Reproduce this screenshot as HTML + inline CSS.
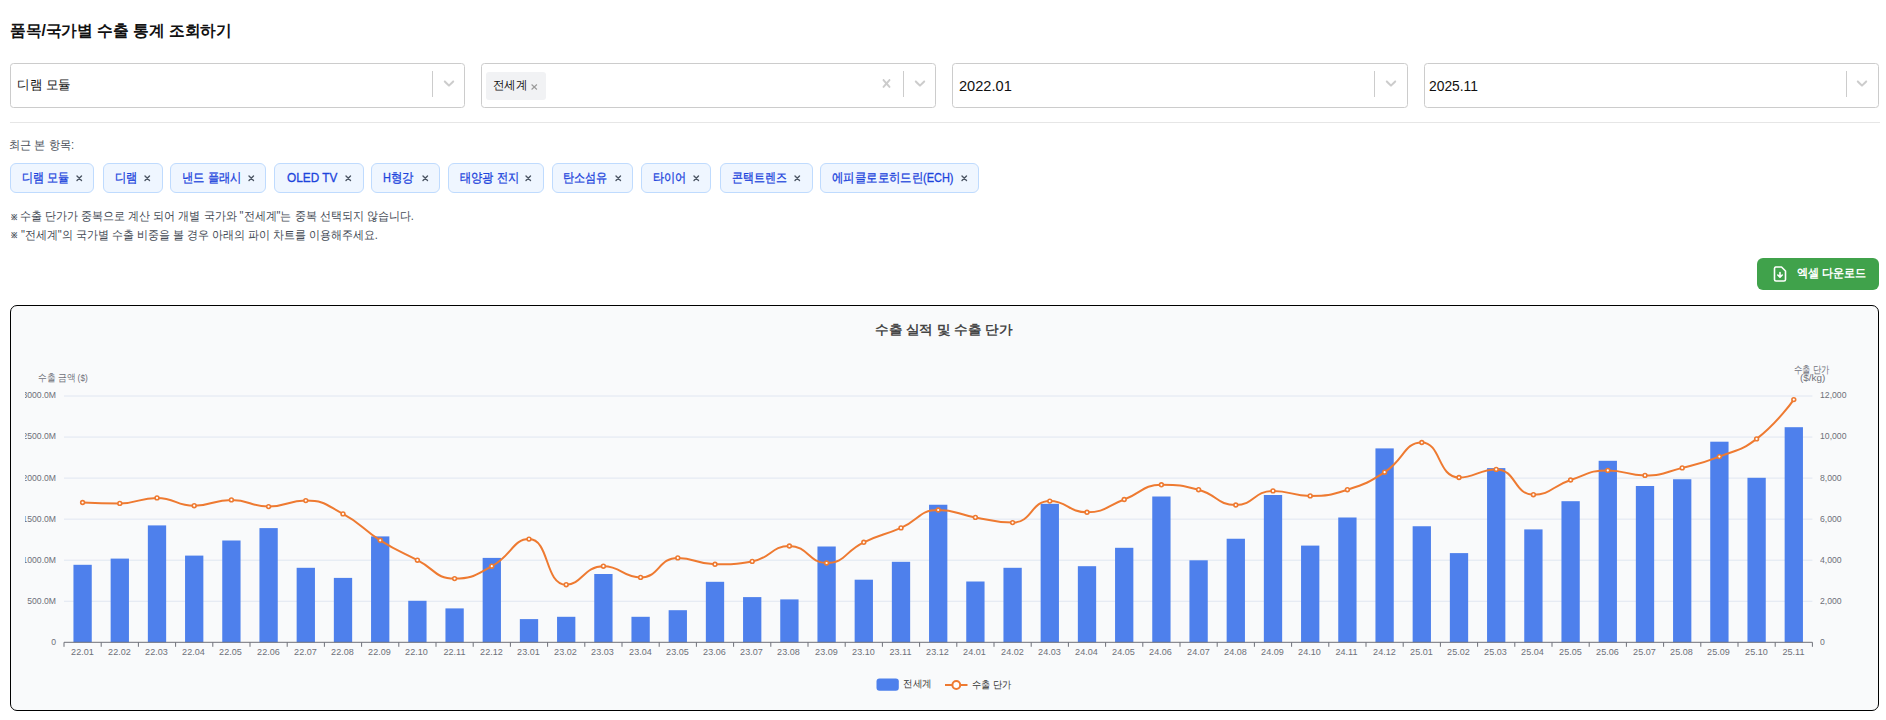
<!DOCTYPE html>
<html><head><meta charset="utf-8">
<style>
html,body{margin:0;padding:0;background:#fff;width:1886px;height:720px;overflow:hidden;position:relative;font-family:"Liberation Sans",sans-serif;}
.t{position:absolute;white-space:nowrap;line-height:1;transform-origin:0 0;font-family:"Liberation Sans",sans-serif;}
.ax{font-size:10px;color:#6e7079;}
.ax.c{transform-origin:0 0;}
.ax.r{transform-origin:100% 0;}
.ic{position:absolute;}
.sel{position:absolute;top:63px;height:45px;box-sizing:border-box;border:1px solid #cccccc;border-radius:3.5px;background:#fff;}
.sep{position:absolute;top:70.5px;width:1px;height:26.5px;background:#cccccc;}
.mv{position:absolute;left:486.2px;top:72px;width:59.6px;height:27.6px;background:#f1f2f4;border-radius:3px;}
.hr{position:absolute;left:10px;top:122px;width:1870px;height:1px;background:#e6e6e6;}
.chip{position:absolute;top:163.3px;height:29.4px;box-sizing:border-box;border:1px solid #bfdbfe;background:#eff6ff;border-radius:6px;}
.btn{position:absolute;left:1757px;top:258px;width:122px;height:32px;background:#40a24b;border-radius:6px;}
.chart{position:absolute;left:10px;top:305px;width:1869px;height:406px;box-sizing:border-box;border:1px solid #000;border-radius:7px;background:#f9fafb;}
svg.c{position:absolute;left:0;top:0;}
.clip{position:absolute;left:25px;top:306px;width:1853px;height:404px;overflow:hidden;}
.clip .inner{position:absolute;left:-25px;top:-306px;width:1886px;height:720px;}
</style></head><body>
<div class="sel" style="left:10.00px;width:455.30px"></div><div class="sep" style="left:432.10px"></div><svg class="ic" style="left:439.55px;top:74.27px" width="18" height="18" viewBox="0 0 20 20"><path d="M4.516 7.548c0.436-0.446 1.043-0.481 1.576 0l3.908 3.747 3.908-3.747c0.533-0.481 1.141-0.446 1.574 0 0.436 0.445 0.408 1.197 0 1.615-0.406 0.418-4.695 4.502-4.695 4.502-0.217 0.223-0.502 0.335-0.787 0.335s-0.57-0.112-0.789-0.335c0 0-4.287-4.084-4.695-4.502s-0.436-1.17 0-1.615z" fill="#cccccc"/></svg><div class="sel" style="left:481.17px;width:455.30px"></div><div class="sep" style="left:903.27px"></div><svg class="ic" style="left:910.72px;top:74.27px" width="18" height="18" viewBox="0 0 20 20"><path d="M4.516 7.548c0.436-0.446 1.043-0.481 1.576 0l3.908 3.747 3.908-3.747c0.533-0.481 1.141-0.446 1.574 0 0.436 0.445 0.408 1.197 0 1.615-0.406 0.418-4.695 4.502-4.695 4.502-0.217 0.223-0.502 0.335-0.787 0.335s-0.57-0.112-0.789-0.335c0 0-4.287-4.084-4.695-4.502s-0.436-1.17 0-1.615z" fill="#cccccc"/></svg><div class="sel" style="left:952.34px;width:455.30px"></div><div class="sep" style="left:1374.44px"></div><svg class="ic" style="left:1381.89px;top:74.27px" width="18" height="18" viewBox="0 0 20 20"><path d="M4.516 7.548c0.436-0.446 1.043-0.481 1.576 0l3.908 3.747 3.908-3.747c0.533-0.481 1.141-0.446 1.574 0 0.436 0.445 0.408 1.197 0 1.615-0.406 0.418-4.695 4.502-4.695 4.502-0.217 0.223-0.502 0.335-0.787 0.335s-0.57-0.112-0.789-0.335c0 0-4.287-4.084-4.695-4.502s-0.436-1.17 0-1.615z" fill="#cccccc"/></svg><div class="sel" style="left:1423.51px;width:455.30px"></div><div class="sep" style="left:1845.61px"></div><svg class="ic" style="left:1853.06px;top:74.27px" width="18" height="18" viewBox="0 0 20 20"><path d="M4.516 7.548c0.436-0.446 1.043-0.481 1.576 0l3.908 3.747 3.908-3.747c0.533-0.481 1.141-0.446 1.574 0 0.436 0.445 0.408 1.197 0 1.615-0.406 0.418-4.695 4.502-4.695 4.502-0.217 0.223-0.502 0.335-0.787 0.335s-0.57-0.112-0.789-0.335c0 0-4.287-4.084-4.695-4.502s-0.436-1.17 0-1.615z" fill="#cccccc"/></svg><div class="mv"></div><svg class="ic" style="left:531px;top:84px" width="6.5" height="6" viewBox="0 0 6.5 6"><path d="M0.6 0.5 L5.9 5.5 M5.9 0.5 L0.6 5.5" stroke="#9a9a9a" stroke-width="1.1"/></svg><svg class="ic" style="left:878.3px;top:75.25px" width="17" height="17" viewBox="0 0 20 20"><path d="M14.348 14.849c-0.469 0.469-1.229 0.469-1.697 0l-2.651-3.030-2.651 3.029c-0.469 0.469-1.229 0.469-1.697 0-0.469-0.469-0.469-1.229 0-1.697l2.758-3.150-2.759-3.152c-0.469-0.469-0.469-1.228 0-1.697s1.228-0.469 1.697 0l2.652 3.031 2.651-3.031c0.469-0.469 1.228-0.469 1.697 0s0.469 1.229 0 1.697l-2.758 3.152 2.758 3.150c0.469 0.469 0.469 1.229 0 1.698z" fill="#cccccc"/></svg>
<div class="hr"></div>
<div class="chip" style="left:10.2px;width:84.3px"></div><svg class="ic" style="left:76.30px;top:175.2px" width="6.5" height="6.5" viewBox="0 0 6.5 6.5"><path d="M1 1 L5.5 5.5 M5.5 1 L1 5.5" stroke="#4b5563" stroke-width="1.4" stroke-linecap="round"/></svg><div class="chip" style="left:103.3px;width:59.3px"></div><svg class="ic" style="left:144.40px;top:175.2px" width="6.5" height="6.5" viewBox="0 0 6.5 6.5"><path d="M1 1 L5.5 5.5 M5.5 1 L1 5.5" stroke="#4b5563" stroke-width="1.4" stroke-linecap="round"/></svg><div class="chip" style="left:170.3px;width:96.0px"></div><svg class="ic" style="left:248.10px;top:175.2px" width="6.5" height="6.5" viewBox="0 0 6.5 6.5"><path d="M1 1 L5.5 5.5 M5.5 1 L1 5.5" stroke="#4b5563" stroke-width="1.4" stroke-linecap="round"/></svg><div class="chip" style="left:274.2px;width:89.4px"></div><svg class="ic" style="left:345.40px;top:175.2px" width="6.5" height="6.5" viewBox="0 0 6.5 6.5"><path d="M1 1 L5.5 5.5 M5.5 1 L1 5.5" stroke="#4b5563" stroke-width="1.4" stroke-linecap="round"/></svg><div class="chip" style="left:371.2px;width:69.1px"></div><svg class="ic" style="left:422.10px;top:175.2px" width="6.5" height="6.5" viewBox="0 0 6.5 6.5"><path d="M1 1 L5.5 5.5 M5.5 1 L1 5.5" stroke="#4b5563" stroke-width="1.4" stroke-linecap="round"/></svg><div class="chip" style="left:448.1px;width:95.5px"></div><svg class="ic" style="left:525.40px;top:175.2px" width="6.5" height="6.5" viewBox="0 0 6.5 6.5"><path d="M1 1 L5.5 5.5 M5.5 1 L1 5.5" stroke="#4b5563" stroke-width="1.4" stroke-linecap="round"/></svg><div class="chip" style="left:551.5px;width:81.9px"></div><svg class="ic" style="left:615.20px;top:175.2px" width="6.5" height="6.5" viewBox="0 0 6.5 6.5"><path d="M1 1 L5.5 5.5 M5.5 1 L1 5.5" stroke="#4b5563" stroke-width="1.4" stroke-linecap="round"/></svg><div class="chip" style="left:641.2px;width:70.2px"></div><svg class="ic" style="left:693.20px;top:175.2px" width="6.5" height="6.5" viewBox="0 0 6.5 6.5"><path d="M1 1 L5.5 5.5 M5.5 1 L1 5.5" stroke="#4b5563" stroke-width="1.4" stroke-linecap="round"/></svg><div class="chip" style="left:720.2px;width:92.4px"></div><svg class="ic" style="left:794.40px;top:175.2px" width="6.5" height="6.5" viewBox="0 0 6.5 6.5"><path d="M1 1 L5.5 5.5 M5.5 1 L1 5.5" stroke="#4b5563" stroke-width="1.4" stroke-linecap="round"/></svg><div class="chip" style="left:820.1px;width:159.3px"></div><svg class="ic" style="left:961.20px;top:175.2px" width="6.5" height="6.5" viewBox="0 0 6.5 6.5"><path d="M1 1 L5.5 5.5 M5.5 1 L1 5.5" stroke="#4b5563" stroke-width="1.4" stroke-linecap="round"/></svg>
<div class="btn"><svg class="ic" style="left:16px;top:8px" width="14" height="16" viewBox="0 0 14 16"><path d="M2.5 1 H8.5 L12.5 5 V13.5 Q12.5 15 11 15 H3 Q1.5 15 1.5 13.5 V2.5 Q1.5 1 3 1 Z" fill="none" stroke="#fff" stroke-width="1.6" stroke-linejoin="round"/><path d="M7 6.5 V11 M4.8 9 L7 11.2 L9.2 9" fill="none" stroke="#fff" stroke-width="1.6" stroke-linecap="round" stroke-linejoin="round"/></svg></div>
<div class="chart"></div>
<div class="clip"><div class="inner">
<svg class="c" width="1886" height="720" viewBox="0 0 1886 720">
<line x1="64.0" y1="601.25" x2="1812.4" y2="601.25" stroke="#e0e6f1" stroke-width="1"/>
<line x1="64.0" y1="560.20" x2="1812.4" y2="560.20" stroke="#e0e6f1" stroke-width="1"/>
<line x1="64.0" y1="519.15" x2="1812.4" y2="519.15" stroke="#e0e6f1" stroke-width="1"/>
<line x1="64.0" y1="478.10" x2="1812.4" y2="478.10" stroke="#e0e6f1" stroke-width="1"/>
<line x1="64.0" y1="437.05" x2="1812.4" y2="437.05" stroke="#e0e6f1" stroke-width="1"/>
<line x1="64.0" y1="396.00" x2="1812.4" y2="396.00" stroke="#e0e6f1" stroke-width="1"/>
<rect x="73.45" y="564.80" width="18.3" height="77.50" fill="#4e80ec"/>
<rect x="110.65" y="558.60" width="18.3" height="83.70" fill="#4e80ec"/>
<rect x="147.85" y="525.40" width="18.3" height="116.90" fill="#4e80ec"/>
<rect x="185.05" y="555.60" width="18.3" height="86.70" fill="#4e80ec"/>
<rect x="222.25" y="540.50" width="18.3" height="101.80" fill="#4e80ec"/>
<rect x="259.45" y="528.10" width="18.3" height="114.20" fill="#4e80ec"/>
<rect x="296.65" y="567.80" width="18.3" height="74.50" fill="#4e80ec"/>
<rect x="333.85" y="577.90" width="18.3" height="64.40" fill="#4e80ec"/>
<rect x="371.05" y="536.40" width="18.3" height="105.90" fill="#4e80ec"/>
<rect x="408.25" y="600.80" width="18.3" height="41.50" fill="#4e80ec"/>
<rect x="445.45" y="608.40" width="18.3" height="33.90" fill="#4e80ec"/>
<rect x="482.65" y="557.90" width="18.3" height="84.40" fill="#4e80ec"/>
<rect x="519.85" y="619.10" width="18.3" height="23.20" fill="#4e80ec"/>
<rect x="557.05" y="616.80" width="18.3" height="25.50" fill="#4e80ec"/>
<rect x="594.25" y="574.00" width="18.3" height="68.30" fill="#4e80ec"/>
<rect x="631.45" y="616.80" width="18.3" height="25.50" fill="#4e80ec"/>
<rect x="668.65" y="610.20" width="18.3" height="32.10" fill="#4e80ec"/>
<rect x="705.85" y="581.80" width="18.3" height="60.50" fill="#4e80ec"/>
<rect x="743.05" y="597.10" width="18.3" height="45.20" fill="#4e80ec"/>
<rect x="780.25" y="599.40" width="18.3" height="42.90" fill="#4e80ec"/>
<rect x="817.45" y="546.50" width="18.3" height="95.80" fill="#4e80ec"/>
<rect x="854.65" y="579.70" width="18.3" height="62.60" fill="#4e80ec"/>
<rect x="891.85" y="561.80" width="18.3" height="80.50" fill="#4e80ec"/>
<rect x="929.05" y="504.75" width="18.3" height="137.55" fill="#4e80ec"/>
<rect x="966.25" y="581.50" width="18.3" height="60.80" fill="#4e80ec"/>
<rect x="1003.45" y="567.80" width="18.3" height="74.50" fill="#4e80ec"/>
<rect x="1040.65" y="503.80" width="18.3" height="138.50" fill="#4e80ec"/>
<rect x="1077.85" y="566.20" width="18.3" height="76.10" fill="#4e80ec"/>
<rect x="1115.05" y="547.80" width="18.3" height="94.50" fill="#4e80ec"/>
<rect x="1152.25" y="496.50" width="18.3" height="145.80" fill="#4e80ec"/>
<rect x="1189.45" y="560.30" width="18.3" height="82.00" fill="#4e80ec"/>
<rect x="1226.65" y="538.75" width="18.3" height="103.55" fill="#4e80ec"/>
<rect x="1263.85" y="495.00" width="18.3" height="147.30" fill="#4e80ec"/>
<rect x="1301.05" y="545.60" width="18.3" height="96.70" fill="#4e80ec"/>
<rect x="1338.25" y="517.50" width="18.3" height="124.80" fill="#4e80ec"/>
<rect x="1375.45" y="448.40" width="18.3" height="193.90" fill="#4e80ec"/>
<rect x="1412.65" y="526.25" width="18.3" height="116.05" fill="#4e80ec"/>
<rect x="1449.85" y="553.10" width="18.3" height="89.20" fill="#4e80ec"/>
<rect x="1487.05" y="468.10" width="18.3" height="174.20" fill="#4e80ec"/>
<rect x="1524.25" y="529.40" width="18.3" height="112.90" fill="#4e80ec"/>
<rect x="1561.45" y="501.20" width="18.3" height="141.10" fill="#4e80ec"/>
<rect x="1598.65" y="460.80" width="18.3" height="181.50" fill="#4e80ec"/>
<rect x="1635.85" y="486.00" width="18.3" height="156.30" fill="#4e80ec"/>
<rect x="1673.05" y="479.25" width="18.3" height="163.05" fill="#4e80ec"/>
<rect x="1710.25" y="441.70" width="18.3" height="200.60" fill="#4e80ec"/>
<rect x="1747.45" y="477.80" width="18.3" height="164.50" fill="#4e80ec"/>
<rect x="1784.65" y="427.20" width="18.3" height="215.10" fill="#4e80ec"/>
<line x1="64.0" y1="642.3" x2="1812.4" y2="642.3" stroke="#6e7079" stroke-width="1"/>
<line x1="64.00" y1="642.3" x2="64.00" y2="646.8" stroke="#6e7079" stroke-width="1"/>
<line x1="101.20" y1="642.3" x2="101.20" y2="646.8" stroke="#6e7079" stroke-width="1"/>
<line x1="138.40" y1="642.3" x2="138.40" y2="646.8" stroke="#6e7079" stroke-width="1"/>
<line x1="175.60" y1="642.3" x2="175.60" y2="646.8" stroke="#6e7079" stroke-width="1"/>
<line x1="212.80" y1="642.3" x2="212.80" y2="646.8" stroke="#6e7079" stroke-width="1"/>
<line x1="250.00" y1="642.3" x2="250.00" y2="646.8" stroke="#6e7079" stroke-width="1"/>
<line x1="287.20" y1="642.3" x2="287.20" y2="646.8" stroke="#6e7079" stroke-width="1"/>
<line x1="324.40" y1="642.3" x2="324.40" y2="646.8" stroke="#6e7079" stroke-width="1"/>
<line x1="361.60" y1="642.3" x2="361.60" y2="646.8" stroke="#6e7079" stroke-width="1"/>
<line x1="398.80" y1="642.3" x2="398.80" y2="646.8" stroke="#6e7079" stroke-width="1"/>
<line x1="436.00" y1="642.3" x2="436.00" y2="646.8" stroke="#6e7079" stroke-width="1"/>
<line x1="473.20" y1="642.3" x2="473.20" y2="646.8" stroke="#6e7079" stroke-width="1"/>
<line x1="510.40" y1="642.3" x2="510.40" y2="646.8" stroke="#6e7079" stroke-width="1"/>
<line x1="547.60" y1="642.3" x2="547.60" y2="646.8" stroke="#6e7079" stroke-width="1"/>
<line x1="584.80" y1="642.3" x2="584.80" y2="646.8" stroke="#6e7079" stroke-width="1"/>
<line x1="622.00" y1="642.3" x2="622.00" y2="646.8" stroke="#6e7079" stroke-width="1"/>
<line x1="659.20" y1="642.3" x2="659.20" y2="646.8" stroke="#6e7079" stroke-width="1"/>
<line x1="696.40" y1="642.3" x2="696.40" y2="646.8" stroke="#6e7079" stroke-width="1"/>
<line x1="733.60" y1="642.3" x2="733.60" y2="646.8" stroke="#6e7079" stroke-width="1"/>
<line x1="770.80" y1="642.3" x2="770.80" y2="646.8" stroke="#6e7079" stroke-width="1"/>
<line x1="808.00" y1="642.3" x2="808.00" y2="646.8" stroke="#6e7079" stroke-width="1"/>
<line x1="845.20" y1="642.3" x2="845.20" y2="646.8" stroke="#6e7079" stroke-width="1"/>
<line x1="882.40" y1="642.3" x2="882.40" y2="646.8" stroke="#6e7079" stroke-width="1"/>
<line x1="919.60" y1="642.3" x2="919.60" y2="646.8" stroke="#6e7079" stroke-width="1"/>
<line x1="956.80" y1="642.3" x2="956.80" y2="646.8" stroke="#6e7079" stroke-width="1"/>
<line x1="994.00" y1="642.3" x2="994.00" y2="646.8" stroke="#6e7079" stroke-width="1"/>
<line x1="1031.20" y1="642.3" x2="1031.20" y2="646.8" stroke="#6e7079" stroke-width="1"/>
<line x1="1068.40" y1="642.3" x2="1068.40" y2="646.8" stroke="#6e7079" stroke-width="1"/>
<line x1="1105.60" y1="642.3" x2="1105.60" y2="646.8" stroke="#6e7079" stroke-width="1"/>
<line x1="1142.80" y1="642.3" x2="1142.80" y2="646.8" stroke="#6e7079" stroke-width="1"/>
<line x1="1180.00" y1="642.3" x2="1180.00" y2="646.8" stroke="#6e7079" stroke-width="1"/>
<line x1="1217.20" y1="642.3" x2="1217.20" y2="646.8" stroke="#6e7079" stroke-width="1"/>
<line x1="1254.40" y1="642.3" x2="1254.40" y2="646.8" stroke="#6e7079" stroke-width="1"/>
<line x1="1291.60" y1="642.3" x2="1291.60" y2="646.8" stroke="#6e7079" stroke-width="1"/>
<line x1="1328.80" y1="642.3" x2="1328.80" y2="646.8" stroke="#6e7079" stroke-width="1"/>
<line x1="1366.00" y1="642.3" x2="1366.00" y2="646.8" stroke="#6e7079" stroke-width="1"/>
<line x1="1403.20" y1="642.3" x2="1403.20" y2="646.8" stroke="#6e7079" stroke-width="1"/>
<line x1="1440.40" y1="642.3" x2="1440.40" y2="646.8" stroke="#6e7079" stroke-width="1"/>
<line x1="1477.60" y1="642.3" x2="1477.60" y2="646.8" stroke="#6e7079" stroke-width="1"/>
<line x1="1514.80" y1="642.3" x2="1514.80" y2="646.8" stroke="#6e7079" stroke-width="1"/>
<line x1="1552.00" y1="642.3" x2="1552.00" y2="646.8" stroke="#6e7079" stroke-width="1"/>
<line x1="1589.20" y1="642.3" x2="1589.20" y2="646.8" stroke="#6e7079" stroke-width="1"/>
<line x1="1626.40" y1="642.3" x2="1626.40" y2="646.8" stroke="#6e7079" stroke-width="1"/>
<line x1="1663.60" y1="642.3" x2="1663.60" y2="646.8" stroke="#6e7079" stroke-width="1"/>
<line x1="1700.80" y1="642.3" x2="1700.80" y2="646.8" stroke="#6e7079" stroke-width="1"/>
<line x1="1738.00" y1="642.3" x2="1738.00" y2="646.8" stroke="#6e7079" stroke-width="1"/>
<line x1="1775.20" y1="642.3" x2="1775.20" y2="646.8" stroke="#6e7079" stroke-width="1"/>
<line x1="1812.40" y1="642.3" x2="1812.40" y2="646.8" stroke="#6e7079" stroke-width="1"/>
<path d="M82.60,502.50 C82.60,502.50 101.30,503.40 119.80,503.40 C138.50,503.40 138.50,497.90 157.00,497.90 C175.70,497.90 175.51,505.70 194.20,505.70 C212.71,505.70 212.84,499.90 231.40,499.90 C250.04,499.90 249.97,506.60 268.60,506.60 C287.17,506.60 287.64,500.60 305.80,500.60 C324.84,500.60 325.74,504.69 343.00,513.90 C362.94,524.54 360.87,528.27 380.20,540.30 C398.07,551.42 398.65,550.55 417.40,560.20 C435.85,569.70 435.47,578.60 454.60,578.60 C472.67,578.60 474.69,575.29 491.80,566.20 C511.89,555.54 512.67,539.10 529.00,539.10 C549.87,539.10 544.39,584.70 566.20,584.70 C581.59,584.70 584.18,566.20 603.40,566.20 C621.38,566.20 622.73,577.40 640.60,577.40 C659.93,577.40 658.21,557.90 677.80,557.90 C695.41,557.90 696.29,564.30 715.00,564.30 C733.49,564.30 734.31,564.30 752.20,561.40 C771.51,558.27 770.95,546.00 789.40,546.00 C808.15,546.00 808.37,563.00 826.60,563.00 C845.57,563.00 844.60,551.36 863.80,542.30 C881.80,533.81 882.72,535.84 901.00,527.90 C919.92,519.69 918.81,510.00 938.20,510.00 C956.01,510.00 956.71,514.23 975.40,517.40 C993.91,520.53 995.25,522.60 1012.60,522.60 C1032.45,522.60 1030.26,501.10 1049.80,501.10 C1067.46,501.10 1068.52,512.30 1087.00,512.30 C1105.72,512.30 1105.75,506.32 1124.20,499.50 C1142.95,492.57 1142.21,484.80 1161.40,484.80 C1179.41,484.80 1180.65,484.83 1198.60,489.70 C1217.85,494.93 1217.10,505.00 1235.80,505.00 C1254.30,505.00 1253.86,490.90 1273.00,490.90 C1291.06,490.90 1291.64,495.90 1310.20,495.90 C1328.84,495.90 1329.60,495.37 1347.40,489.70 C1366.80,483.52 1367.36,483.14 1384.60,472.20 C1404.56,459.54 1403.86,442.50 1421.80,442.50 C1441.06,442.50 1437.69,477.50 1459.00,477.50 C1474.89,477.50 1479.15,469.40 1496.20,469.40 C1516.35,469.40 1513.71,494.70 1533.40,494.70 C1550.91,494.70 1551.63,486.20 1570.60,480.00 C1588.83,474.05 1588.98,470.40 1607.80,470.40 C1626.18,470.40 1626.50,475.40 1645.00,475.40 C1663.70,475.40 1663.83,472.54 1682.20,467.90 C1701.03,463.14 1701.34,463.64 1719.40,456.60 C1738.54,449.14 1740.52,451.22 1756.60,438.90 C1777.72,422.72 1793.80,399.60 1793.80,399.60" fill="none" stroke="#ee7a31" stroke-width="2" stroke-linejoin="round"/>
<circle cx="82.60" cy="502.50" r="1.9" fill="#fff" stroke="#ee7a31" stroke-width="1.6"/>
<circle cx="119.80" cy="503.40" r="1.9" fill="#fff" stroke="#ee7a31" stroke-width="1.6"/>
<circle cx="157.00" cy="497.90" r="1.9" fill="#fff" stroke="#ee7a31" stroke-width="1.6"/>
<circle cx="194.20" cy="505.70" r="1.9" fill="#fff" stroke="#ee7a31" stroke-width="1.6"/>
<circle cx="231.40" cy="499.90" r="1.9" fill="#fff" stroke="#ee7a31" stroke-width="1.6"/>
<circle cx="268.60" cy="506.60" r="1.9" fill="#fff" stroke="#ee7a31" stroke-width="1.6"/>
<circle cx="305.80" cy="500.60" r="1.9" fill="#fff" stroke="#ee7a31" stroke-width="1.6"/>
<circle cx="343.00" cy="513.90" r="1.9" fill="#fff" stroke="#ee7a31" stroke-width="1.6"/>
<circle cx="380.20" cy="540.30" r="1.9" fill="#fff" stroke="#ee7a31" stroke-width="1.6"/>
<circle cx="417.40" cy="560.20" r="1.9" fill="#fff" stroke="#ee7a31" stroke-width="1.6"/>
<circle cx="454.60" cy="578.60" r="1.9" fill="#fff" stroke="#ee7a31" stroke-width="1.6"/>
<circle cx="491.80" cy="566.20" r="1.9" fill="#fff" stroke="#ee7a31" stroke-width="1.6"/>
<circle cx="529.00" cy="539.10" r="1.9" fill="#fff" stroke="#ee7a31" stroke-width="1.6"/>
<circle cx="566.20" cy="584.70" r="1.9" fill="#fff" stroke="#ee7a31" stroke-width="1.6"/>
<circle cx="603.40" cy="566.20" r="1.9" fill="#fff" stroke="#ee7a31" stroke-width="1.6"/>
<circle cx="640.60" cy="577.40" r="1.9" fill="#fff" stroke="#ee7a31" stroke-width="1.6"/>
<circle cx="677.80" cy="557.90" r="1.9" fill="#fff" stroke="#ee7a31" stroke-width="1.6"/>
<circle cx="715.00" cy="564.30" r="1.9" fill="#fff" stroke="#ee7a31" stroke-width="1.6"/>
<circle cx="752.20" cy="561.40" r="1.9" fill="#fff" stroke="#ee7a31" stroke-width="1.6"/>
<circle cx="789.40" cy="546.00" r="1.9" fill="#fff" stroke="#ee7a31" stroke-width="1.6"/>
<circle cx="826.60" cy="563.00" r="1.9" fill="#fff" stroke="#ee7a31" stroke-width="1.6"/>
<circle cx="863.80" cy="542.30" r="1.9" fill="#fff" stroke="#ee7a31" stroke-width="1.6"/>
<circle cx="901.00" cy="527.90" r="1.9" fill="#fff" stroke="#ee7a31" stroke-width="1.6"/>
<circle cx="938.20" cy="510.00" r="1.9" fill="#fff" stroke="#ee7a31" stroke-width="1.6"/>
<circle cx="975.40" cy="517.40" r="1.9" fill="#fff" stroke="#ee7a31" stroke-width="1.6"/>
<circle cx="1012.60" cy="522.60" r="1.9" fill="#fff" stroke="#ee7a31" stroke-width="1.6"/>
<circle cx="1049.80" cy="501.10" r="1.9" fill="#fff" stroke="#ee7a31" stroke-width="1.6"/>
<circle cx="1087.00" cy="512.30" r="1.9" fill="#fff" stroke="#ee7a31" stroke-width="1.6"/>
<circle cx="1124.20" cy="499.50" r="1.9" fill="#fff" stroke="#ee7a31" stroke-width="1.6"/>
<circle cx="1161.40" cy="484.80" r="1.9" fill="#fff" stroke="#ee7a31" stroke-width="1.6"/>
<circle cx="1198.60" cy="489.70" r="1.9" fill="#fff" stroke="#ee7a31" stroke-width="1.6"/>
<circle cx="1235.80" cy="505.00" r="1.9" fill="#fff" stroke="#ee7a31" stroke-width="1.6"/>
<circle cx="1273.00" cy="490.90" r="1.9" fill="#fff" stroke="#ee7a31" stroke-width="1.6"/>
<circle cx="1310.20" cy="495.90" r="1.9" fill="#fff" stroke="#ee7a31" stroke-width="1.6"/>
<circle cx="1347.40" cy="489.70" r="1.9" fill="#fff" stroke="#ee7a31" stroke-width="1.6"/>
<circle cx="1384.60" cy="472.20" r="1.9" fill="#fff" stroke="#ee7a31" stroke-width="1.6"/>
<circle cx="1421.80" cy="442.50" r="1.9" fill="#fff" stroke="#ee7a31" stroke-width="1.6"/>
<circle cx="1459.00" cy="477.50" r="1.9" fill="#fff" stroke="#ee7a31" stroke-width="1.6"/>
<circle cx="1496.20" cy="469.40" r="1.9" fill="#fff" stroke="#ee7a31" stroke-width="1.6"/>
<circle cx="1533.40" cy="494.70" r="1.9" fill="#fff" stroke="#ee7a31" stroke-width="1.6"/>
<circle cx="1570.60" cy="480.00" r="1.9" fill="#fff" stroke="#ee7a31" stroke-width="1.6"/>
<circle cx="1607.80" cy="470.40" r="1.9" fill="#fff" stroke="#ee7a31" stroke-width="1.6"/>
<circle cx="1645.00" cy="475.40" r="1.9" fill="#fff" stroke="#ee7a31" stroke-width="1.6"/>
<circle cx="1682.20" cy="467.90" r="1.9" fill="#fff" stroke="#ee7a31" stroke-width="1.6"/>
<circle cx="1719.40" cy="456.60" r="1.9" fill="#fff" stroke="#ee7a31" stroke-width="1.6"/>
<circle cx="1756.60" cy="438.90" r="1.9" fill="#fff" stroke="#ee7a31" stroke-width="1.6"/>
<circle cx="1793.80" cy="399.60" r="1.9" fill="#fff" stroke="#ee7a31" stroke-width="1.6"/>
<rect x="876.5" y="678.4" width="22.3" height="12.4" rx="3" fill="#4e80ec"/>
<line x1="945" y1="685" x2="967.5" y2="685" stroke="#ee7a31" stroke-width="2"/>
<circle cx="956.3" cy="685" r="3.9" fill="#fff" stroke="#ee7a31" stroke-width="2"/>
</svg>
<span class="t ax c" style="font-size:9.5px;left:82.60px;top:647.40px;transform:translateX(-50%) scaleX(0.9522)">22.01</span><span class="t ax c" style="font-size:9.5px;left:119.80px;top:647.40px;transform:translateX(-50%) scaleX(0.9522)">22.02</span><span class="t ax c" style="font-size:9.5px;left:157.00px;top:647.40px;transform:translateX(-50%) scaleX(0.9522)">22.03</span><span class="t ax c" style="font-size:9.5px;left:194.20px;top:647.40px;transform:translateX(-50%) scaleX(0.9522)">22.04</span><span class="t ax c" style="font-size:9.5px;left:231.40px;top:647.40px;transform:translateX(-50%) scaleX(0.9522)">22.05</span><span class="t ax c" style="font-size:9.5px;left:268.60px;top:647.40px;transform:translateX(-50%) scaleX(0.9522)">22.06</span><span class="t ax c" style="font-size:9.5px;left:305.80px;top:647.40px;transform:translateX(-50%) scaleX(0.9522)">22.07</span><span class="t ax c" style="font-size:9.5px;left:343.00px;top:647.40px;transform:translateX(-50%) scaleX(0.9522)">22.08</span><span class="t ax c" style="font-size:9.5px;left:380.20px;top:647.40px;transform:translateX(-50%) scaleX(0.9522)">22.09</span><span class="t ax c" style="font-size:9.5px;left:417.40px;top:647.40px;transform:translateX(-50%) scaleX(0.9522)">22.10</span><span class="t ax c" style="font-size:9.5px;left:454.60px;top:647.40px;transform:translateX(-50%) scaleX(0.9522)">22.11</span><span class="t ax c" style="font-size:9.5px;left:491.80px;top:647.40px;transform:translateX(-50%) scaleX(0.9522)">22.12</span><span class="t ax c" style="font-size:9.5px;left:529.00px;top:647.40px;transform:translateX(-50%) scaleX(0.9522)">23.01</span><span class="t ax c" style="font-size:9.5px;left:566.20px;top:647.40px;transform:translateX(-50%) scaleX(0.9522)">23.02</span><span class="t ax c" style="font-size:9.5px;left:603.40px;top:647.40px;transform:translateX(-50%) scaleX(0.9522)">23.03</span><span class="t ax c" style="font-size:9.5px;left:640.60px;top:647.40px;transform:translateX(-50%) scaleX(0.9522)">23.04</span><span class="t ax c" style="font-size:9.5px;left:677.80px;top:647.40px;transform:translateX(-50%) scaleX(0.9522)">23.05</span><span class="t ax c" style="font-size:9.5px;left:715.00px;top:647.40px;transform:translateX(-50%) scaleX(0.9522)">23.06</span><span class="t ax c" style="font-size:9.5px;left:752.20px;top:647.40px;transform:translateX(-50%) scaleX(0.9522)">23.07</span><span class="t ax c" style="font-size:9.5px;left:789.40px;top:647.40px;transform:translateX(-50%) scaleX(0.9522)">23.08</span><span class="t ax c" style="font-size:9.5px;left:826.60px;top:647.40px;transform:translateX(-50%) scaleX(0.9522)">23.09</span><span class="t ax c" style="font-size:9.5px;left:863.80px;top:647.40px;transform:translateX(-50%) scaleX(0.9522)">23.10</span><span class="t ax c" style="font-size:9.5px;left:901.00px;top:647.40px;transform:translateX(-50%) scaleX(0.9522)">23.11</span><span class="t ax c" style="font-size:9.5px;left:938.20px;top:647.40px;transform:translateX(-50%) scaleX(0.9522)">23.12</span><span class="t ax c" style="font-size:9.5px;left:975.40px;top:647.40px;transform:translateX(-50%) scaleX(0.9522)">24.01</span><span class="t ax c" style="font-size:9.5px;left:1012.60px;top:647.40px;transform:translateX(-50%) scaleX(0.9522)">24.02</span><span class="t ax c" style="font-size:9.5px;left:1049.80px;top:647.40px;transform:translateX(-50%) scaleX(0.9522)">24.03</span><span class="t ax c" style="font-size:9.5px;left:1087.00px;top:647.40px;transform:translateX(-50%) scaleX(0.9522)">24.04</span><span class="t ax c" style="font-size:9.5px;left:1124.20px;top:647.40px;transform:translateX(-50%) scaleX(0.9522)">24.05</span><span class="t ax c" style="font-size:9.5px;left:1161.40px;top:647.40px;transform:translateX(-50%) scaleX(0.9522)">24.06</span><span class="t ax c" style="font-size:9.5px;left:1198.60px;top:647.40px;transform:translateX(-50%) scaleX(0.9522)">24.07</span><span class="t ax c" style="font-size:9.5px;left:1235.80px;top:647.40px;transform:translateX(-50%) scaleX(0.9522)">24.08</span><span class="t ax c" style="font-size:9.5px;left:1273.00px;top:647.40px;transform:translateX(-50%) scaleX(0.9522)">24.09</span><span class="t ax c" style="font-size:9.5px;left:1310.20px;top:647.40px;transform:translateX(-50%) scaleX(0.9522)">24.10</span><span class="t ax c" style="font-size:9.5px;left:1347.40px;top:647.40px;transform:translateX(-50%) scaleX(0.9522)">24.11</span><span class="t ax c" style="font-size:9.5px;left:1384.60px;top:647.40px;transform:translateX(-50%) scaleX(0.9522)">24.12</span><span class="t ax c" style="font-size:9.5px;left:1421.80px;top:647.40px;transform:translateX(-50%) scaleX(0.9522)">25.01</span><span class="t ax c" style="font-size:9.5px;left:1459.00px;top:647.40px;transform:translateX(-50%) scaleX(0.9522)">25.02</span><span class="t ax c" style="font-size:9.5px;left:1496.20px;top:647.40px;transform:translateX(-50%) scaleX(0.9522)">25.03</span><span class="t ax c" style="font-size:9.5px;left:1533.40px;top:647.40px;transform:translateX(-50%) scaleX(0.9522)">25.04</span><span class="t ax c" style="font-size:9.5px;left:1570.60px;top:647.40px;transform:translateX(-50%) scaleX(0.9522)">25.05</span><span class="t ax c" style="font-size:9.5px;left:1607.80px;top:647.40px;transform:translateX(-50%) scaleX(0.9522)">25.06</span><span class="t ax c" style="font-size:9.5px;left:1645.00px;top:647.40px;transform:translateX(-50%) scaleX(0.9522)">25.07</span><span class="t ax c" style="font-size:9.5px;left:1682.20px;top:647.40px;transform:translateX(-50%) scaleX(0.9522)">25.08</span><span class="t ax c" style="font-size:9.5px;left:1719.40px;top:647.40px;transform:translateX(-50%) scaleX(0.9522)">25.09</span><span class="t ax c" style="font-size:9.5px;left:1756.60px;top:647.40px;transform:translateX(-50%) scaleX(0.9522)">25.10</span><span class="t ax c" style="font-size:9.5px;left:1793.80px;top:647.40px;transform:translateX(-50%) scaleX(0.9522)">25.11</span><span class="t ax r" style="font-size:9px;right:1829.75px;top:637.70px;transform:scaleX(0.9583)">0</span><span class="t ax" style="font-size:9px;left:1820px;top:637.70px;transform:scaleX(0.9615)">0</span><span class="t ax r" style="font-size:9px;right:1829.75px;top:596.65px;transform:scaleX(0.9583)">500.0M</span><span class="t ax" style="font-size:9px;left:1820px;top:596.65px;transform:scaleX(0.9615)">2,000</span><span class="t ax r" style="font-size:9px;right:1829.75px;top:555.60px;transform:scaleX(0.9583)">1000.0M</span><span class="t ax" style="font-size:9px;left:1820px;top:555.60px;transform:scaleX(0.9615)">4,000</span><span class="t ax r" style="font-size:9px;right:1829.75px;top:514.55px;transform:scaleX(0.9583)">1500.0M</span><span class="t ax" style="font-size:9px;left:1820px;top:514.55px;transform:scaleX(0.9615)">6,000</span><span class="t ax r" style="font-size:9px;right:1829.75px;top:473.50px;transform:scaleX(0.9583)">2000.0M</span><span class="t ax" style="font-size:9px;left:1820px;top:473.50px;transform:scaleX(0.9615)">8,000</span><span class="t ax r" style="font-size:9px;right:1829.75px;top:432.45px;transform:scaleX(0.9583)">2500.0M</span><span class="t ax" style="font-size:9px;left:1820px;top:432.45px;transform:scaleX(0.9615)">10,000</span><span class="t ax r" style="font-size:9px;right:1829.75px;top:391.40px;transform:scaleX(0.9583)">3000.0M</span><span class="t ax" style="font-size:9px;left:1820px;top:391.40px;transform:scaleX(0.9615)">12,000</span>
</div></div>
<span class="t" style="left:9.82px;top:23.30px;font-size:16px;font-weight:bold;color:#111;transform:scaleX(0.9816);">품목/국가별 수출 통계 조회하기</span><span class="t" style="left:17.09px;top:78.10px;font-size:13px;font-weight:normal;color:#111;transform:scaleX(0.9656);">디램 모듈</span><span class="t" style="left:493.04px;top:79.00px;font-size:12px;font-weight:normal;color:#111;transform:scaleX(0.9576);">전세계</span><span class="t" style="left:958.86px;top:78.80px;font-size:14px;font-weight:normal;color:#111;transform:scaleX(1.0429);">2022.01</span><span class="t" style="left:1429.41px;top:79.10px;font-size:14px;font-weight:normal;color:#111;transform:scaleX(0.9875);">2025.11</span><span class="t" style="left:9.27px;top:139.20px;font-size:12px;font-weight:normal;color:#444b55;transform:scaleX(0.9294);">최근 본 항목:</span><span class="t" style="left:21.75px;top:172.00px;font-size:12.5px;font-weight:normal;color:#1c44dc;transform:scaleX(0.8491);-webkit-text-stroke:0.3px #1c44dc">디램 모듈</span><span class="t" style="left:114.83px;top:172.00px;font-size:12.5px;font-weight:normal;color:#1c44dc;transform:scaleX(0.8696);-webkit-text-stroke:0.3px #1c44dc">디램</span><span class="t" style="left:181.83px;top:172.00px;font-size:12.5px;font-weight:normal;color:#1c44dc;transform:scaleX(0.8723);-webkit-text-stroke:0.3px #1c44dc">낸드 플래시</span><span class="t" style="left:286.60px;top:171.80px;font-size:12.5px;font-weight:normal;color:#1c44dc;transform:scaleX(0.9453);-webkit-text-stroke:0.3px #1c44dc">OLED TV</span><span class="t" style="left:382.72px;top:172.00px;font-size:12.5px;font-weight:normal;color:#1c44dc;transform:scaleX(0.8765);-webkit-text-stroke:0.3px #1c44dc">H형강</span><span class="t" style="left:459.64px;top:172.00px;font-size:12.5px;font-weight:normal;color:#1c44dc;transform:scaleX(0.8646);-webkit-text-stroke:0.3px #1c44dc">태양광 전지</span><span class="t" style="left:563.05px;top:172.00px;font-size:12.5px;font-weight:normal;color:#1c44dc;transform:scaleX(0.8520);-webkit-text-stroke:0.3px #1c44dc">탄소섬유</span><span class="t" style="left:652.74px;top:172.00px;font-size:12.5px;font-weight:normal;color:#1c44dc;transform:scaleX(0.8583);-webkit-text-stroke:0.3px #1c44dc">타이어</span><span class="t" style="left:731.76px;top:172.00px;font-size:12.5px;font-weight:normal;color:#1c44dc;transform:scaleX(0.8429);-webkit-text-stroke:0.3px #1c44dc">콘택트렌즈</span><span class="t" style="left:831.62px;top:172.00px;font-size:12.5px;font-weight:normal;color:#1c44dc;transform:scaleX(0.8759);-webkit-text-stroke:0.3px #1c44dc">에피클로로히드린(ECH)</span><span class="t" style="left:10.50px;top:213.70px;font-size:8px;font-weight:bold;color:#444b55;transform:scaleX(0.9429);">※</span><span class="t" style="left:19.88px;top:210.40px;font-size:12px;font-weight:normal;color:#444b55;transform:scaleX(0.9176);">수출 단가가 중복으로 계산 되어 개별 국가와 "전세계"는 중복 선택되지 않습니다.</span><span class="t" style="left:10.50px;top:231.60px;font-size:8px;font-weight:bold;color:#444b55;transform:scaleX(0.9429);">※</span><span class="t" style="left:21.00px;top:228.80px;font-size:12px;font-weight:normal;color:#444b55;transform:scaleX(0.9152);">"전세계"의 국가별 수출 비중을 볼 경우 아래의 파이 차트를 이용해주세요.</span><span class="t" style="left:1796.50px;top:266.90px;font-size:12px;font-weight:bold;color:#ffffff;transform:scaleX(0.9216);">엑셀 다운로드</span><span class="t" style="left:874.96px;top:322.80px;font-size:13px;font-weight:bold;color:#464646;transform:scaleX(1.0438);">수출 실적 및 수출 단가</span><span class="t" style="left:38.12px;top:373.00px;font-size:9.5px;font-weight:normal;color:#6e7079;transform:scaleX(0.8750);">수출 금액 ($)</span><span class="t" style="left:1793.96px;top:365.00px;font-size:9.5px;font-weight:normal;color:#6e7079;transform:scaleX(0.8381);">수출 단가</span><span class="t" style="left:1800.00px;top:373.00px;font-size:9.5px;font-weight:normal;color:#6e7079;transform:scaleX(1.0417);">($/kg)</span><span class="t" style="left:902.85px;top:678.50px;font-size:10px;font-weight:normal;color:#333;transform:scaleX(0.9536);">전세계</span><span class="t" style="left:971.67px;top:679.50px;font-size:10px;font-weight:normal;color:#333;transform:scaleX(0.9286);">수출 단가</span>
<script>
(function(){
  var adv = [24,24,24,24,24,24,24,24,24,24,23,24,24,24,24,24,24,24,24,24,24,24,23,24,24,24,24,24,24,24,24,24,24,24,23,24,24,24,24,24,24,24,24,24,24,24,23,5,5,30,23,35,23,35,23,35,23,35,28,35,28,226,56,36,51,50,70,55,26,68,53,35,68,52,39,65,139,7,429,7,390,75,131,57,43,24,30,43];
  var els = document.querySelectorAll('.t');
  if (!adv.length || els.length !== adv.length) return;
  for (var i=0;i<els.length;i++){
    var e = els[i], w = e.offsetWidth, a = adv[i];
    if (!w || !a) continue;
    if (Math.abs(w-a)/a < 0.015) continue;
    var tr = e.style.transform;
    var m = tr.match(/scaleX\(([\d.]+)\)/);
    if (!m) continue;
    var ns = parseFloat(m[1]) * a / w;
    e.style.transform = tr.replace(/scaleX\([\d.]+\)/, 'scaleX(' + ns.toFixed(4) + ')');
  }
})();
</script>

</body></html>
